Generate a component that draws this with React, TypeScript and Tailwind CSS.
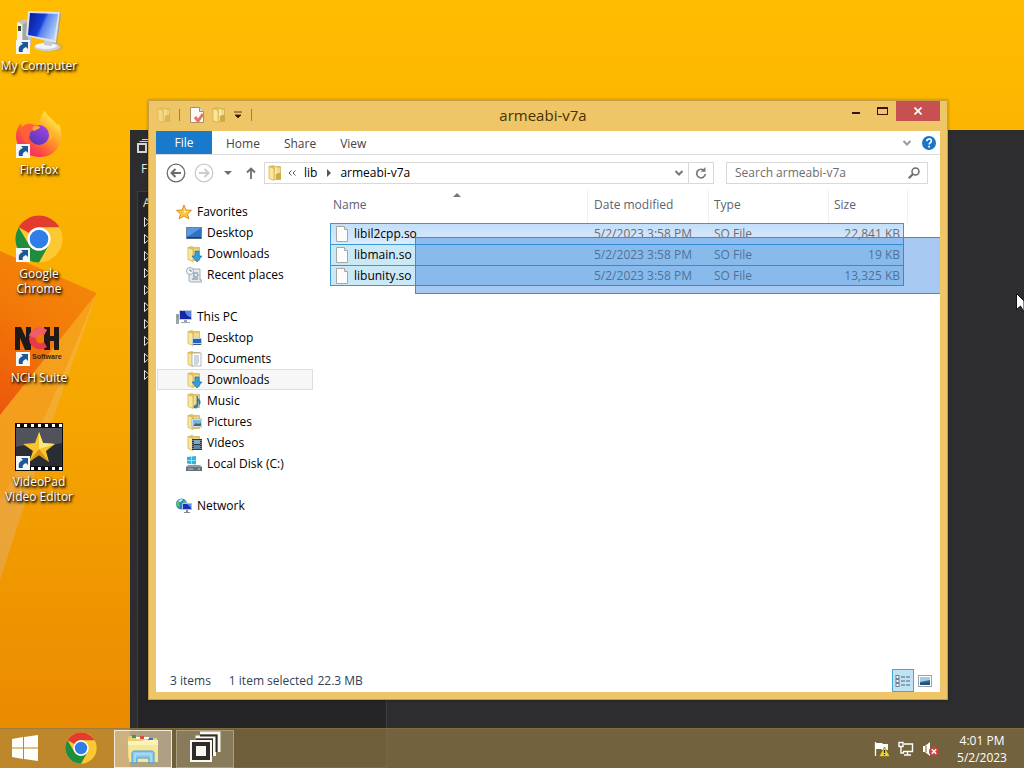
import React from 'react';

type FolderKind = 'plain' | 'desktop' | 'downloads' | 'documents' | 'music' | 'pictures' | 'videos';

interface IconProps {
  className?: string;
}

interface SidebarItem {
  label: string;
  icon: React.ReactNode;
  active?: boolean;
}

interface SidebarGroup {
  label: string;
  icon: React.ReactNode;
  items: SidebarItem[];
}

/* ---------- Icons ---------- */

const ShortcutArrow = () => (
  <g>
    <rect x="1" y="33" width="14" height="14" fill="#f4f6f8" />
    <path d="M4 45c-1-5 1-7 4-8l-2-2h7v7l-2-2c-3 1-4 3-3 5z" fill="#1d5798" />
  </g>
);

const ComputerIcon = () => (
  <svg viewBox="0 0 48 48" className="w-12 h-12">
    <defs>
      <linearGradient id="pc-screen" x1="0" y1="0.2" x2="1" y2="0.6">
        <stop offset="0" stopColor="#0a1c98" />
        <stop offset="0.45" stopColor="#1740d8" />
        <stop offset="0.55" stopColor="#5684ec" />
        <stop offset="1" stopColor="#b9d2fb" />
      </linearGradient>
    </defs>
    <path d="M2 15l8-3 6 2v24l-7 4-7-2z" fill="#c4c5c2" />
    <path d="M2 15l5 2v24l-5-2z" fill="#f1f1ee" />
    <path d="M8 17l5-2v20l-5 3z" fill="#a3a6a6" />
    <path d="M3 19h3v5H3z" fill="#3c4a2a" />
    <path d="M33 34l8 1 2 5-10-1z" fill="#a9adb2" />
    <ellipse cx="42" cy="40" rx="9" ry="4" transform="translate(-2 0)" fill="#c5a45c" opacity="0.5" />
    <ellipse cx="32" cy="40" rx="13" ry="4" fill="#cdd1d5" />
    <ellipse cx="31" cy="39" rx="11" ry="3" fill="#f3f4f5" />
    <path d="M29 32l8 1v6l-8-1z" fill="#c7cbd0" />
    <path d="M13 4l32 1-4 31-30-7z" fill="#dfe2e6" />
    <path d="M45 5l1 2-4 30-1-1z" fill="#9da3aa" />
    <path d="M15 6l28 1-4 26-26-5z" fill="url(#pc-screen)" />
    <ShortcutArrow />
  </svg>
);

const FirefoxIcon = () => (
  <svg viewBox="0 0 48 48" className="w-12 h-12">
    <defs>
      <linearGradient id="fx-body" x1="0.85" y1="0.1" x2="0.2" y2="0.9">
        <stop offset="0" stopColor="#fff04a" />
        <stop offset="0.4" stopColor="#ffa028" />
        <stop offset="0.75" stopColor="#ff5040" />
        <stop offset="1" stopColor="#f02a78" />
      </linearGradient>
      <linearGradient id="fx-globe" x1="0.8" y1="0" x2="0.2" y2="1">
        <stop offset="0" stopColor="#a445e0" />
        <stop offset="1" stopColor="#5238b8" />
      </linearGradient>
    </defs>
    <path
      d="M30 0c2 6 9 8 12 14l2-1c3 7 3 16-1 23-4 7-11 10-18 10C12 46 1 37 1 25c0-5 2-10 5-13l1 4c2-2 5-4 8-4l9 2c1-5 2-11 6-14z"
      fill="url(#fx-body)"
    />
    <circle cx="24" cy="24" r="10" fill="url(#fx-globe)" />
    <path d="M6 17c4-4 9-5 13-3 4 0 6 1 6 2l-6 3c-3 1-5 3-4 6-3 1-3 6 1 9-7-2-12-9-10-17z" fill="#ff6038" />
    <path d="M19 15c4-1 6 1 6 2l-6 3c-2-1-2-4 0-5z" fill="#ffa53c" />
    <path d="M30 15c5 3 7 9 4 15 6-5 5-13-4-15z" fill="#ffb42e" />
    <ShortcutArrow />
  </svg>
);

const ChromeMark = ({ className }: IconProps) => (
  <svg viewBox="0 0 48 48" className={className}>
    <circle cx="24" cy="24" r="23.500" fill="#fcc934" />
    <path d="M3.700 12.200A23.500 23.500 0 0 1 44.300 12.200H24A11.500 11.500 0 0 0 14 18z" fill="#e33b2e" />
    <path d="M3.700 12.200L14 29.800A11.500 11.500 0 0 0 34 29.800L24 47.500A23.500 23.500 0 0 1 3.700 12.200z" fill="#1e8e3e" />
    <circle cx="24" cy="24" r="11.500" fill="#fff" />
    <circle cx="24" cy="24" r="9.300" fill="#2f7de9" />
  </svg>
);

const ChromeIcon = () => (
  <div className="relative w-12 h-12">
    <ChromeMark className="w-12 h-12" />
    <svg viewBox="0 0 48 48" className="absolute inset-0 w-12 h-12">
      <ShortcutArrow />
    </svg>
  </div>
);

const NchIcon = () => (
  <svg viewBox="0 0 48 48" className="w-12 h-12">
    <path d="M0 8h6l5 11V8h5v23h-6L5 19v12H0z" fill="#1f1a17" />
    <path d="M29 8h6v9h4V8h5v23h-5v-9h-4v9h-6z" fill="#1f1a17" />
    <path d="M32 11a11 11 0 1 0 0 17l-3-5c-4 3-8 1-8-3 0-5 4-7 8-4z" fill="#e8384a" />
    <path d="M23 9a11 11 0 0 0-9 8l7 2c1-3 4-5 8-3l3-5c-3-2-6-3-9-2z" fill="#f05d67" />
    <text x="17" y="40" fontSize="7" fontWeight="700" fontFamily="Liberation Sans, sans-serif" fill="#3a2410">
      Software
    </text>
    <ShortcutArrow />
  </svg>
);

const VideoPadIcon = () => (
  <svg viewBox="0 0 48 48" className="w-12 h-12">
    <rect width="48" height="48" fill="#0b0b0d" />
    <rect x="1" y="5" width="46" height="38" fill="#2b2d35" />
    <path d="M1 5h46v15C30 24 15 20 1 24z" fill="#50525c" />
    {[2, 9, 16, 23, 30, 37, 44].map((x) => (
      <g key={x} fill="#fff">
        <rect x={x} y="1" width="3" height="3" />
        <rect x={x} y="44" width="3" height="3" />
      </g>
    ))}
    <path d="M24 9l4 11 12 1-9 7 3 11-10-7-10 7 4-11-10-7 12-1z" fill="#f9c32b" />
    <path d="M24 9l4 11 12 1-16 5z" fill="#fde878" />
    <path d="M24 26l10 13-10-7-10 7z" fill="#dd9414" />
    <ShortcutArrow />
  </svg>
);

const FolderIcon = ({ kind = 'plain', className = 'w-4 h-4' }: { kind?: FolderKind; className?: string }) => (
  <svg viewBox="0 0 16 16" className={className}>
    <path d="M2 1.500L6 .5l2 1h5.500v13H6z" fill="#e3c55c" stroke="#c9a744" strokeWidth="0.6" />
    <path d="M8 3h5v11H7z" fill="#efdc8a" />
    <path d="M2 1.500l5 2v12l-5-2z" fill="#f9e79a" stroke="#cfae4c" strokeWidth="0.7" />
    {kind === 'plain' && <path d="M9 9l2-1h3v6.500H9z" fill="#cfab40" />}
    {kind === 'plain' && <path d="M9 2v7" stroke="#fdf8df" />}
    {kind === 'desktop' && (
      <g>
        <rect x="6" y="8" width="10" height="7" fill="#c2d0de" />
        <rect x="7" y="9" width="8" height="4" fill="#2565b8" />
        <path d="M7 14h8v1H7z" fill="#3e5878" />
      </g>
    )}
    {kind === 'downloads' && (
      <path d="M9 5h4v5h3l-5 6-5-6h3z" fill="#35a0dd" stroke="#176da8" strokeWidth="0.7" />
    )}
    {kind === 'documents' && (
      <g>
        <rect x="6" y="2" width="9" height="13" fill="#fff" stroke="#8e9dad" strokeWidth="0.7" />
        <path d="M8 5h5M8 7h5M8 9h5M8 11h5M8 13h4" stroke="#8797a8" strokeWidth="0.8" />
      </g>
    )}
    {kind === 'music' && (
      <path
        d="M11 3c0 3 4 3 3 8h-1c1-3-1-4-1-4v6c0 2-4 3-4 1s2-2 3-2z"
        fill="#2a91d2"
        stroke="#1767a0"
        strokeWidth="0.7"
      />
    )}
    {kind === 'pictures' && (
      <g>
        <rect x="6" y="5" width="10" height="8" fill="#fff" stroke="#8e9dad" strokeWidth="0.7" />
        <rect x="7" y="6" width="8" height="6" fill="#76b6e4" />
        <path d="M7 12l3-3 2 1 3-1v3z" fill="#386f56" />
      </g>
    )}
    {kind === 'videos' && (
      <g>
        <rect x="6" y="4" width="10" height="11" fill="#30363c" />
        <rect x="8" y="5" width="6" height="4" fill="#7ba8cf" />
        <rect x="8" y="10" width="6" height="4" fill="#5d86ad" />
        <path d="M7 5v10M15 5v10" stroke="#e8e8e8" strokeDasharray="1 1" strokeWidth="0.8" />
      </g>
    )}
  </svg>
);

const StarIcon = () => (
  <svg viewBox="0 0 16 16" className="w-4 h-4">
    <path d="M8 1l2 5 5.500.3-4 3.700 1.400 5L8 12l-4.900 3 1.400-5-4-3.700L6 6z" fill="#fbc63c" stroke="#dc851c" strokeWidth="0.9" />
    <path d="M8 3l1 4 4 0-5 2z" fill="#fff0a6" />
  </svg>
);

const DesktopIcon = () => (
  <svg viewBox="0 0 16 16" className="w-4 h-4">
    <rect x="0.500" y="2.500" width="15" height="11" fill="#2f6fc4" stroke="#6d84a0" />
    <path d="M1 3h14L3 11H1z" fill="#5b97e0" />
    <rect x="1" y="12" width="14" height="1.500" fill="#24405f" />
  </svg>
);

const RecentIcon = () => (
  <svg viewBox="0 0 16 16" className="w-4 h-4">
    <path d="M5 2h9v11h2v2H5l-2-1V8z" fill="#e5ebf0" stroke="#8899a8" strokeWidth="0.8" />
    <path d="M7 6h5M7 8h2M11 8h2M7 10h5M6 12h6" stroke="#6b8094" />
    <circle cx="4" cy="4" r="3.500" fill="#f6f9fb" stroke="#8899a8" strokeWidth="0.8" />
    <path d="M4 2v2h2" stroke="#5a7084" fill="none" strokeWidth="0.8" />
  </svg>
);

const ThisPcIcon = () => (
  <svg viewBox="0 0 16 16" className="w-4 h-4">
    <path d="M0 5h3v10H0z" fill="#9aa7a5" />
    <path d="M1 6h1v3H1z" fill="#58b04a" />
    <rect x="3" y="1" width="13" height="10" fill="#c7ced8" />
    <rect x="4" y="2" width="11" height="8" fill="#1526a8" />
    <path d="M9 2h6v6c-3 0-5-2-6-6z" fill="#5a86ea" />
    <path d="M8 11h3v2h3v1H5v-1h3z" fill="#9aa4ae" />
  </svg>
);

const DiskIcon = () => (
  <svg viewBox="0 0 16 16" className="w-4 h-4">
    <path d="M1 1l4-.5v3.500H1zM5.500.5L10 0v4H5.500zM1 4.500h4V8L1 7.500zM5.500 4.500H10V8.500L5.500 8z" fill="#2bb5e0" />
    <path d="M2 9h12l2 2v4H0v-4z" fill="#8e9aa6" />
    <path d="M0 11h16v4H0z" fill="#66737f" />
    <path d="M2 13h5" stroke="#b8c3cc" />
    <rect x="12" y="12" width="2" height="2" fill="#63d256" />
  </svg>
);

const NetworkIcon = () => (
  <svg viewBox="0 0 16 16" className="w-4 h-4">
    <circle cx="5.500" cy="6" r="5.500" fill="#2b82c6" />
    <path d="M2 3c2-2 4-2 5-2l-2 3-2 1 1 3-2 1-2-3zM7 3l3 0v3H8z" fill="#5cc169" />
    <path d="M2 3l3-2 2 1-3 2z" fill="#c6ebf0" />
    <rect x="6" y="5" width="10" height="7" fill="#b5c1d0" />
    <rect x="7" y="6" width="8" height="5" fill="#1630b8" />
    <path d="M11 6h4v4z" fill="#5d86ea" />
    <path d="M10 12h2v2h2v1H8v-1h2z" fill="#7e8a96" />
  </svg>
);

const FileIcon = () => (
  <svg viewBox="0 0 14 16" className="w-[14px] h-4 shrink-0">
    <path d="M1.500.5h8l3 3v12h-11z" fill="#fdfdfd" stroke="#a8a8a2" />
    <path d="M9.500.5v3h3" fill="#ececea" stroke="#a8a8a2" />
  </svg>
);

const PropertiesIcon = () => (
  <svg viewBox="0 0 16 16" className="w-4 h-4">
    <path d="M1.500.5h9l4 4v11h-13z" fill="#fdf9f5" stroke="#a5906e" />
    <path d="M10.500.5v4h4" fill="#e8e0d4" stroke="#a5906e" />
    <path d="M6 10l3 4 5-7" fill="none" stroke="#de7a62" strokeWidth="3" />
  </svg>
);

const CascadeIcon = ({ className }: IconProps) => (
  <svg viewBox="0 0 32 32" className={className}>
    <path d="M11 2h19v19M6.500 6h19v19" fill="none" stroke="#f8f7f2" strokeWidth="3" />
    <path d="M11 4.500h16.500V21M7 8.500h16V25" fill="none" stroke="#2e2b28" strokeWidth="2" />
    <rect x="2" y="10" width="20" height="20" fill="#2e2b28" stroke="#f8f7f2" strokeWidth="2" />
    <rect x="7" y="15" width="10" height="10" fill="#f8f7f2" />
  </svg>
);

const SmallCascadeIcon = () => (
  <svg viewBox="0 0 14 14" className="w-[14px] h-[14px]" fill="none" stroke="#d6d6d6">
    <rect x="1" y="5" width="8" height="8" strokeWidth="2" />
    <path d="M2.500 2.500h9v9M5 .5h8.500V9" />
  </svg>
);

const ExplorerIcon = () => (
  <svg viewBox="0 0 32 32" className="w-8 h-8">
    <path d="M2 3h7l2 2h19v20H1V5z" fill="#e9cf6e" />
    <path d="M5 2h4v3H5z" fill="#3a9c4c" />
    <path d="M13 3h4v3h-4z" fill="#dd4b3e" />
    <path d="M21 5h5v3h-5z" fill="#3878cc" />
    <path d="M9 4h4v2H9zM17 4h5v2h-5z" fill="#fdfbf0" />
    <path d="M1 8h14l2-1h14v22H2z" fill="#f5e795" />
    <path d="M1 8h14l2-1h14v5H1z" fill="#fbf3ba" />
    <path d="M5 30V20c0-1 1-2 2-2h18c1 0 2 1 2 2v10h-5v-5H10v5z" fill="#8acbf1" stroke="#4f9fd2" />
    <path d="M8 29v-8h16v8" fill="none" stroke="#c2e6fa" />
  </svg>
);

const WindowsLogo = () => (
  <svg viewBox="0 0 28 26" className="w-7 h-[26px]">
    <path d="M1 4l11-2v10.500H1zM13 2l14-2v12.500H13zM1 13.500h11V24L1 22zM13 13.500h14V26l-14-2z" fill="#fffdf8" />
  </svg>
);

const CursorIcon = () => (
  <svg viewBox="0 0 8 20" className="absolute top-[293px] right-0 z-50 w-2 h-5">
    <path d="M.5.5v16l4-3.500L8 19V8z" fill="#fff" stroke="#111" />
  </svg>
);

/* ---------- Data ---------- */

const desktopIcons = [
  { label: 'My Computer', icon: <ComputerIcon /> },
  { label: 'Firefox', icon: <FirefoxIcon /> },
  { label: 'Google Chrome', icon: <ChromeIcon /> },
  { label: 'NCH Suite', icon: <NchIcon /> },
  { label: 'VideoPad Video Editor', icon: <VideoPadIcon /> },
];

const sidebarGroups: SidebarGroup[] = [
  {
    label: 'Favorites',
    icon: <StarIcon />,
    items: [
      { label: 'Desktop', icon: <DesktopIcon /> },
      { label: 'Downloads', icon: <FolderIcon kind="downloads" /> },
      { label: 'Recent places', icon: <RecentIcon /> },
    ],
  },
  {
    label: 'This PC',
    icon: <ThisPcIcon />,
    items: [
      { label: 'Desktop', icon: <FolderIcon kind="desktop" /> },
      { label: 'Documents', icon: <FolderIcon kind="documents" /> },
      { label: 'Downloads', icon: <FolderIcon kind="downloads" />, active: true },
      { label: 'Music', icon: <FolderIcon kind="music" /> },
      { label: 'Pictures', icon: <FolderIcon kind="pictures" /> },
      { label: 'Videos', icon: <FolderIcon kind="videos" /> },
      { label: 'Local Disk (C:)', icon: <DiskIcon /> },
    ],
  },
  { label: 'Network', icon: <NetworkIcon />, items: [] },
];

const files = [
  { name: 'libil2cpp.so', date: '5/2/2023 3:58 PM', type: 'SO File', size: '22,841 KB' },
  { name: 'libmain.so', date: '5/2/2023 3:58 PM', type: 'SO File', size: '19 KB' },
  { name: 'libunity.so', date: '5/2/2023 3:58 PM', type: 'SO File', size: '13,325 KB' },
];

/* ---------- Desktop ---------- */

const Wallpaper = () => (
  <div className="absolute inset-0 bg-gradient-to-b from-[#ffbc00] via-[#f7a800] to-[#e98700]">
    <svg viewBox="0 0 140 768" className="w-[140px] h-full" preserveAspectRatio="none">
      <defs>
        <linearGradient id="wp-red" x1="0" y1="1" x2="0.5" y2="0">
          <stop offset="0" stopColor="#ec560c" />
          <stop offset="0.6" stopColor="#f27a08" />
          <stop offset="1" stopColor="#f48608" />
        </linearGradient>
        <linearGradient id="wp-peach" x1="1" y1="0" x2="0" y2="1">
          <stop offset="0" stopColor="#fab428" />
          <stop offset="1" stopColor="#e9a238" />
        </linearGradient>
      </defs>
      <path d="M0 251l97 42C70 370 45 440 0 580z" fill="url(#wp-peach)" />
      <path d="M97 293C72 350 40 440 0 500V415z" fill="#f59a12" opacity="0.7" />
      <path d="M0 251l97 42L0 415z" fill="url(#wp-red)" />
    </svg>
  </div>
);

const DesktopIcons = () => (
  <div className="relative flex flex-col w-[78px] pt-[7px]">
    {desktopIcons.map((item) => (
      <a key={item.label} href="#" className="flex flex-col items-center gap-[3px] h-[104px]">
        {item.icon}
        <span className="w-20 text-center text-xs leading-[15px] text-white [text-shadow:1px_1px_2px_#000,1px_2px_3px_#000]">
          {item.label}
        </span>
      </a>
    ))}
  </div>
);

// Dark application sitting behind the explorer, mostly covered
const BackgroundWindow = () => (
  <div className="absolute top-[130px] right-0 bottom-0 left-[130px] flex flex-col bg-[#2d2d30] text-xs text-[#e6e6e6] overflow-hidden">
    <div className="flex flex-col shrink-0 h-[61px] pl-[7px] pt-[9px]">
      <SmallCascadeIcon />
      <span className="pl-1 pt-2">F</span>
    </div>
    <div className="flex flex-col flex-1 w-[250px] ml-[7px] pl-[5px] pt-[3px] border border-[#3d3d41] bg-[#252527]">
      <span className="h-[18px]">A</span>
      {Array.from({ length: 10 }, (_, i) => (
        <svg key={i} viewBox="0 0 8 17" className="w-2 h-[17px] shrink-0">
          <path d="M1.500 4.500v9l5-4.500z" fill="none" stroke="#e6e6e6" />
        </svg>
      ))}
    </div>
  </div>
);

/* ---------- Explorer window ---------- */

const TitleBar = () => (
  <header className="flex items-center h-[30px] pb-0.5 text-[#4a3000]">
    <div className="flex items-center h-full">
      <FolderIcon className="w-4 h-4 opacity-60" />
      <span className="w-px h-3 ml-[7px] mr-[9px] bg-[#a5803a]" />
      <button aria-label="Properties" className="mr-1.5"><PropertiesIcon /></button>
      <button aria-label="New folder"><FolderIcon /></button>
      <button aria-label="Customize" className="px-[7px]">
        <svg viewBox="0 0 8 8" className="w-2 h-2">
          <path d="M0 1h8M1 4h6L4 7z" fill="#3a1c08" stroke="#3a1c08" strokeWidth="0.8" />
        </svg>
      </button>
      <span className="w-px h-3 ml-0.5 bg-[#a5803a]" />
    </div>
    <h1 className="flex-1 pr-2 text-center text-[15px]">armeabi-v7a</h1>
    <div className="flex self-start">
      <button aria-label="Minimize" className="flex items-center justify-center w-[27px] h-5">
        <span className="w-2 h-0.5 mt-1 bg-[#3a1408]" />
      </button>
      <button aria-label="Maximize" className="flex items-center justify-center w-[27px] h-5">
        <span className="w-[11px] h-2 border border-t-2 border-[#3a1408]" />
      </button>
      <button aria-label="Close" className="flex items-center justify-center w-11 h-5 bg-[#c75050]">
        <svg viewBox="0 0 8 8" className="w-2 h-2">
          <path d="M.5.5l7 7M7.500.5l-7 7" stroke="#fff" strokeWidth="1.700" />
        </svg>
      </button>
    </div>
  </header>
);

const RibbonTabs = () => (
  <div className="flex h-6 text-[#444] border-b border-[#dadbdc]">
    <button className="w-14 mr-0.5 bg-[#1979ca] text-white">File</button>
    <button className="px-3 pt-0.5">Home</button>
    <button className="px-3 pt-0.5">Share</button>
    <button className="px-3 pt-0.5">View</button>
    <div className="flex items-center gap-2.5 ml-auto pr-1">
      <button aria-label="Expand ribbon">
        <svg viewBox="0 0 10 6" className="w-2.5 h-1.5">
          <path d="M1.500 1L5 4.500 8.500 1" fill="none" stroke="#9a9a9a" strokeWidth="2" />
        </svg>
      </button>
      <button aria-label="Help">
        <svg viewBox="0 0 14 14" className="w-[14px] h-[14px]">
          <circle cx="7" cy="7" r="7" fill="#1c74c4" />
          <path d="M4.800 5.200c0-3 4.600-3 4.600-.2 0 1.700-2.300 1.800-2.300 3.500" fill="none" stroke="#fff" strokeWidth="1.600" />
          <rect x="6.200" y="9.800" width="1.800" height="1.700" fill="#fff" />
        </svg>
      </button>
    </div>
  </div>
);

const NavigationBar = () => (
  <div className="flex items-center h-[35px] pl-[10px] pr-3">
    <button aria-label="Back">
      <svg viewBox="0 0 20 20" className="w-5 h-5" fill="none" stroke="#6d6d6d">
        <circle cx="10" cy="10" r="8.800" strokeWidth="1.300" />
        <path d="M15 10H6M9.500 6L5.500 10l4 4" strokeWidth="2" />
      </svg>
    </button>
    <button aria-label="Forward" className="ml-2">
      <svg viewBox="0 0 20 20" className="w-5 h-5" fill="none" stroke="#cbcbcb">
        <circle cx="10" cy="10" r="8.800" strokeWidth="1.300" />
        <path d="M5 10h9M10.500 6l4 4-4 4" strokeWidth="2" />
      </svg>
    </button>
    <button aria-label="Recent locations" className="px-2.5">
      <svg viewBox="0 0 8 4" className="w-2 h-1">
        <path d="M0 0h8L4 4z" fill="#6d6d6d" />
      </svg>
    </button>
    <button aria-label="Up" className="pl-1 pr-2">
      <svg viewBox="0 0 10 12" className="w-2.5 h-3" fill="none" stroke="#6d6d6d" strokeWidth="1.800">
        <path d="M5 12V2M1 5.500l4-4 4 4" />
      </svg>
    </button>
    <div className="flex flex-1 items-center h-[22px] border border-[#d9d9d9]">
      <FolderIcon className="w-4 h-4 ml-0.5" />
      <svg viewBox="0 0 8 6" className="w-2 h-1.5 ml-[5px] mr-2" fill="none" stroke="#555">
        <path d="M3.500.5L1 3l2.500 2.500M7.500.5L5 3l2.500 2.500" />
      </svg>
      <span>lib</span>
      <svg viewBox="0 0 4 8" className="w-1 h-2 ml-2.5 mr-[9px]">
        <path d="M0 0v8l4-4z" fill="#555" />
      </svg>
      <span className="flex-1">armeabi-v7a</span>
      <button aria-label="Previous locations" className="px-1">
        <svg viewBox="0 0 10 6" className="w-2.5 h-1.5">
          <path d="M1.500 1L5 4.500 8.500 1" fill="none" stroke="#777" strokeWidth="2" />
        </svg>
      </button>
      <button aria-label="Refresh" className="flex items-center justify-center w-[25px] h-full border-l border-[#d9d9d9]">
        <svg viewBox="0 0 12 12" className="w-3 h-3">
          <path d="M9.500 4A4.300 4.300 0 1 0 10.300 7" fill="none" stroke="#7a7a7a" strokeWidth="1.700" />
          <path d="M5.500 4.800h5V0z" fill="#7a7a7a" />
        </svg>
      </button>
    </div>
    <label className="flex items-center w-[202px] h-[22px] ml-3 pl-2 pr-[7px] border border-[#d9d9d9]">
      <input
        type="text"
        aria-label="Search armeabi-v7a"
        placeholder="Search armeabi-v7a"
        className="flex-1 min-w-0 outline-none placeholder:text-[#6d6d6d]"
      />
      <svg viewBox="0 0 12 12" className="w-3 h-3" fill="none" stroke="#6d6d6d">
        <circle cx="7.500" cy="4.500" r="3.500" strokeWidth="1.500" />
        <path d="M5 7L.8 11.200" strokeWidth="2.200" />
      </svg>
    </label>
  </div>
);

const Sidebar = () => (
  <nav className="flex flex-col shrink-0 gap-[21px] w-[165px] pl-px pr-2 pt-[11px]">
    {sidebarGroups.map((group) => (
      <div key={group.label} className="flex flex-col">
        <a href="#" className="flex items-center gap-[5px] h-[21px] pl-[19px]">
          {group.icon}
          {group.label}
        </a>
        {group.items.map((item) => (
          <a
            key={item.label}
            href="#"
            className={`flex items-center gap-[5px] h-[21px] pl-[28px] border ${
              item.active ? 'border-[#dedede] bg-[#f7f7f7]' : 'border-transparent'
            }`}
          >
            {item.icon}
            {item.label}
          </a>
        ))}
      </div>
    ))}
  </nav>
);

const FileList = () => (
  <main className="relative flex-1 min-w-0 pl-[9px] pr-8">
    <table className="w-full table-fixed border-separate border-spacing-0 text-left">
      <colgroup>
        <col />
        <col className="w-[121px]" />
        <col className="w-[120px]" />
        <col className="w-[76px]" />
        <col className="w-1" />
      </colgroup>
      <thead>
        <tr className="h-[33px] text-[#5a6472]">
          <th className="relative pl-[3px] pb-1 font-normal">
            Name
            <svg viewBox="0 0 8 4" className="absolute top-[3px] right-[126px] w-2 h-1">
              <path d="M0 4h8L4 0z" fill="#777" />
            </svg>
          </th>
          <th className="pl-[6px] pb-1 border-l border-[#f0f0f0] font-normal">Date modified</th>
          <th className="pl-[5px] pb-1 border-l border-[#f0f0f0] font-normal">Type</th>
          <th className="pl-[5px] pb-1 border-l border-[#f0f0f0] font-normal">Size</th>
          <th className="border-r border-[#f0f0f0]" />
        </tr>
      </thead>
      <tbody>
        {files.map((file, i) => {
          const border = i === files.length - 1 ? 'border-y border-[#3a9ad0]' : 'border-t border-[#3a9ad0]';
          const fill = i === 0 ? 'bg-gradient-to-b from-[#c4dffa] to-[#dcebfc]' : 'bg-[#cbe8f6]';
          return (
            <tr key={file.name} className="h-[21px] text-[#6d6d6d]">
              <td className={`p-0 pl-1 border-l text-black ${border} ${fill}`}>
                <div className="flex items-center gap-[5px]">
                  <FileIcon />
                  {file.name}
                </div>
              </td>
              <td className={`p-0 pl-[7px] ${border} ${fill}`}>{file.date}</td>
              <td className={`p-0 pl-[6px] ${border} ${fill}`}>{file.type}</td>
              <td className={`p-0 pr-[3px] text-right border-r ${border} ${fill}`}>{file.size}</td>
              <td className="p-0" />
            </tr>
          );
        })}
      </tbody>
    </table>

    {/* Drag selection rectangle */}
    <div className="absolute top-[47px] right-0 left-[94px] h-[57px] border border-r-0 border-[#3c8cd8] bg-[#2478dc]/40" />
  </main>
);

const StatusBar = () => (
  <footer className="flex items-center h-[23px] pl-[14px] text-[#2f3f55]">
    <span>3 items</span>
    <span className="ml-[18px]">1 item selected</span>
    <span className="ml-1">22.3 MB</span>
    <div className="flex items-center ml-auto pr-1">
      <button aria-label="Details view" className="flex items-center justify-center w-[22px] h-[23px] border border-[#4aa5cf] bg-[#bfe3f5]">
        <svg viewBox="0 0 16 14" className="w-4 h-[14px]">
          {[1, 5, 9].map((y) => (
            <g key={y}>
              <rect x="1" y={y + 0.5} width="3" height="3" fill="#fff" stroke="#6c7f93" />
              <path d={`M6 ${y + 2}h4M11 ${y + 2}h4`} stroke="#4e6378" />
            </g>
          ))}
        </svg>
      </button>
      <button aria-label="Large icons view" className="flex items-center justify-center w-[22px] h-[23px]">
        <svg viewBox="0 0 14 12" className="w-[14px] h-3">
          <rect x="0.500" y="0.500" width="13" height="11" fill="#fff" stroke="#9aa3ad" />
          <rect x="2" y="2" width="10" height="8" fill="#2f6ca5" />
          <path d="M2 2h10v3L2 7z" fill="#a5cbe5" />
          <path d="M2 8l10-1v3H2z" fill="#26506e" />
        </svg>
      </button>
    </div>
  </footer>
);

const ExplorerWindow = () => (
  <section className="absolute top-[100px] right-[76px] bottom-[68px] left-[148px] flex flex-col px-[7px] pb-[7px] border border-[#c99c42] bg-[#eec567] shadow-[0_0_3px_rgba(0,0,0,0.3)]">
    <TitleBar />
    <div className="flex flex-col flex-1 min-h-0 bg-white">
      <RibbonTabs />
      <NavigationBar />
      <div className="flex flex-1 min-h-0">
        <Sidebar />
        <FileList />
      </div>
      <StatusBar />
    </div>
  </section>
);

/* ---------- Taskbar ---------- */

const Taskbar = () => (
  <footer className="relative flex items-center h-10 mt-auto bg-[#a08647]/60 border-t border-[#8a7440]/60 text-white">
    <button aria-label="Start" className="flex justify-center w-[50px] pb-0.5"><WindowsLogo /></button>
    <button aria-label="Chrome" className="flex justify-center w-[62px] pb-0.5"><ChromeMark className="w-8 h-8" /></button>
    <button aria-label="File Explorer" className="flex items-center justify-center w-[58px] h-[38px] ml-0.5 border border-[#f3ead8] bg-[#d8cdb4]/60">
      <ExplorerIcon />
    </button>
    <button aria-label="Background app" className="flex items-center justify-center w-[58px] h-[38px] ml-1 pb-1 border border-[#aba07e] bg-[#c8c0a8]/30">
      <CascadeIcon className="w-8 h-8" />
    </button>
    <div className="flex items-center gap-2 ml-auto">
      <svg viewBox="0 0 16 16" className="w-4 h-4">
        <path d="M1.500 1v14" stroke="#fff" strokeWidth="1.300" />
        <path d="M2 2h6l1 1h5v6H8L7 8H2z" fill="#fff" />
        <path d="M10.500 6L16 15.500H5z" fill="#f0d631" stroke="#77650f" strokeWidth="0.6" />
        <path d="M10.500 9v3M10.500 13v1.200" stroke="#2c2400" strokeWidth="1.300" />
      </svg>
      <svg viewBox="0 0 16 16" className="w-4 h-4" fill="none" stroke="#fff" strokeWidth="1.400">
        <path d="M6 3h8.500v7.500H5M9.500 10.500v3M6 14h7M3 6v6h3" />
        <rect x="1" y="1.500" width="4" height="4" />
      </svg>
      <svg viewBox="0 0 18 16" className="w-[18px] h-4">
        <path d="M1 5h2l5-4v14l-5-4H1z" fill="#fff" />
        <path d="M4 5v6" stroke="#6b5a38" />
        <circle cx="12" cy="10.500" r="5" fill="#c8403a" />
        <path d="M9.800 8.300l4.400 4.400M14.200 8.300l-4.400 4.400" stroke="#fff" strokeWidth="1.500" />
      </svg>
    </div>
    <div className="w-[84px] text-center text-xs leading-[17px]">
      <div>4:01 PM</div>
      <div>5/2/2023</div>
    </div>
  </footer>
);

const App: React.FC = () => {
  return (
    <div className="relative flex flex-col h-screen overflow-hidden font-['Open_Sans','Noto_Sans',sans-serif] text-xs text-black select-none">
      <Wallpaper />
      <DesktopIcons />
      <BackgroundWindow />
      <ExplorerWindow />
      <Taskbar />
      <CursorIcon />
    </div>
  );
};

export default App;
